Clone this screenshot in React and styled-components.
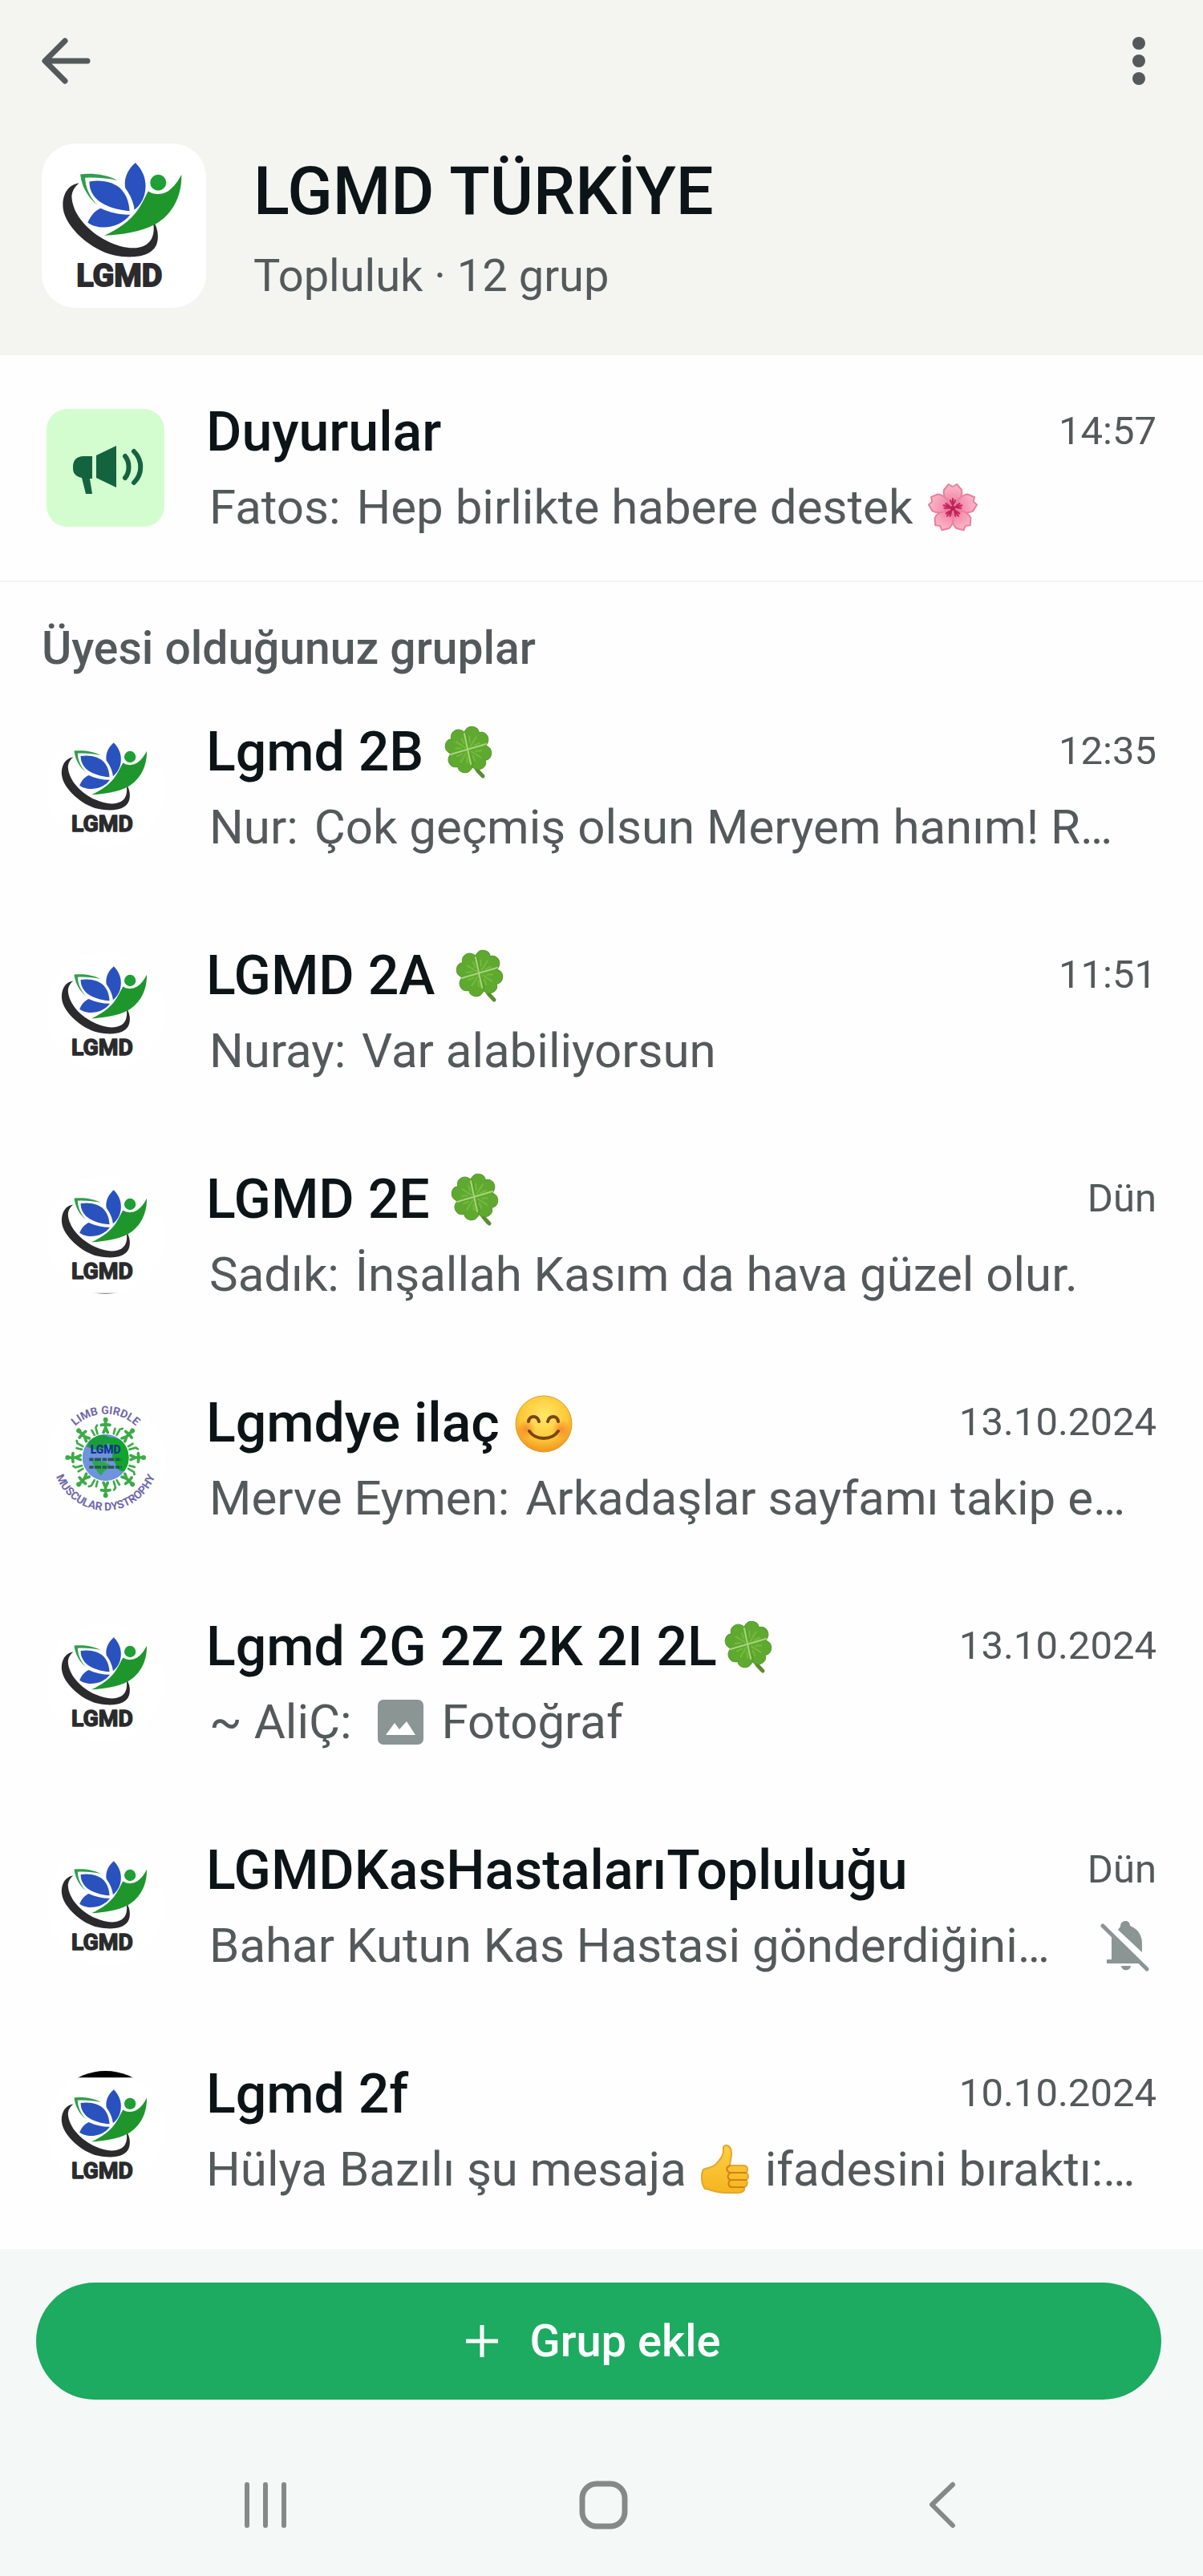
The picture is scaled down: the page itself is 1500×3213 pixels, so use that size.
import React from "react";
import styled, { createGlobalStyle } from "styled-components";

const GlobalStyle = createGlobalStyle`
  *, *::before, *::after { box-sizing: border-box; }
  body { margin: 0; background: #fefefe; font-family: Roboto, "Noto Sans", sans-serif; }
  h1, h2, p, ul { margin: 0; padding: 0; }
`;

const ink = "#0c1418";
const muted = "#54595b";

const Screen = styled.div`
  display: flex;
  flex-direction: column;
  min-height: 100vh;
`;

const Header = styled.header`
  background: #f4f5f1;
  padding-bottom: 58px;
  border-bottom: 1px solid #f0f1ee;
`;

const TopBar = styled.div`
  display: flex;
  justify-content: space-between;
  align-items: center;
  height: 152px;
  padding: 0 40px;
`;

const IconButton = styled.button`
  display: grid;
  place-items: center;
  width: 80px;
  height: 80px;
  padding: 0;
  border: 0;
  background: none;
  color: ${muted};
  cursor: pointer;
`;

const Profile = styled.div`
  display: flex;
  gap: 59px;
  padding: 27px 52px 0;
`;

const ProfileText = styled.div`
  display: flex;
  flex-direction: column;
  gap: 23px;
  padding-top: 12px;
`;

const Title = styled.h1`
  font-size: 83px;
  line-height: 96px;
  font-weight: 500;
  color: ${ink};
`;

const Subtitle = styled.p`
  font-size: 56px;
  line-height: 68px;
  color: ${muted};
`;

const Avatar = styled.div`
  flex: none;
  display: grid;
  place-items: center;
  width: ${(p) => (p.$large ? 205 : 147)}px;
  height: ${(p) => (p.$large ? 205 : 147)}px;
  border-radius: ${(p) => (p.$round ? "50%" : p.$large ? "42px" : "26px")};
  background: ${(p) => p.$bg || "#ffffff"};
  overflow: hidden;

  svg { display: block; }
`;

const Row = styled.a`
  display: flex;
  align-items: center;
  gap: 52px;
  height: ${(p) => (p.$first ? 283 : 279)}px;
  padding: 0 58px;
  border-bottom: ${(p) => (p.$first ? "2px solid #f3f4f4" : "0")};
  color: inherit;
  text-decoration: none;
`;

const RowBody = styled.div`
  flex: 1;
  min-width: 0;
  display: flex;
  flex-direction: column;
  gap: 18px;
`;

const Line = styled.div`
  display: flex;
  justify-content: space-between;
`;

const Name = styled.h2`
  font-size: 68px;
  line-height: 80px;
  font-weight: 500;
  color: ${ink};
  white-space: nowrap;
`;

const Time = styled.time`
  padding-top: 10px;
  font-size: 49px;
  line-height: 58px;
  color: ${muted};
  white-space: nowrap;
`;

const Preview = styled.p`
  padding-left: ${(p) => (p.$flush ? 0 : 4)}px;
  font-size: 60px;
  line-height: 72px;
  color: ${muted};
  white-space: nowrap;
`;

const Sender = styled.span`
  margin-right: 5px;
`;

const Muted = styled.span`
  display: grid;
  place-items: center;
  padding-right: 8px;
`;

const Section = styled.h2`
  padding: 49px 52px 0;
  font-size: 57px;
  line-height: 68px;
  font-weight: 500;
  color: ${muted};
`;

const List = styled.ul`
  list-style: none;
  padding-bottom: 9px;
`;

const Footer = styled.footer`
  flex: 1;
  padding-top: 42px;
  background: #f4f8f7;
`;

const AddButton = styled.button`
  display: flex;
  align-items: center;
  justify-content: center;
  gap: 32px;
  width: calc(100% - 97px);
  height: 146px;
  margin: 0 52px 0 45px;
  padding: 0 22px 0 0;
  border: 0;
  border-radius: 73px;
  background: #1daa61;
  color: #ffffff;
  font: 500 56px/68px Roboto, "Noto Sans", sans-serif;
  cursor: pointer;
`;

const NavBar = styled.nav`
  display: grid;
  grid-template-columns: repeat(3, 1fr);
  justify-items: center;
  padding: 91px 117px 47px 121px;
`;

const Glyph = styled.svg`
  vertical-align: ${(p) => p.$drop}px;
  margin-left: ${(p) => p.$before || 0}px;
  margin-right: ${(p) => p.$after || 0}px;
`;

function LgmdLogo({ size, variant }) {
  return (
    <svg width={size} height={size} viewBox="6 26 614 614" role="img" aria-label="LGMD">
      {variant === "capped" && <path d="M6 26H620V60H6Z" fill="#000" />}
      {variant === "based" && <path d="M6 635H620V640H6Z" fill="#888" />}
      <g transform={variant === "capped" ? "translate(0 25)" : undefined}>
        <path
          d="M146 174C102 178 80 222 86 270C96 340 190 424 275 443C345 458 420 450 436 400C444 374 440 340 422 316C428 352 424 386 396 404C356 426 310 416 262 396C180 358 122 292 118 226C119 202 130 186 146 174Z"
          fill="#2b2b2d"
        />
        <path d="M150 141C196 136 248 142 290 164C254 156 212 152 168 154C170 192 186 226 214 256C178 226 156 188 150 141Z" fill="#2f9e4a" />
        <path d="M184 168C232 160 280 172 304 198C324 220 332 246 334 278C290 274 244 262 216 238C194 218 184 196 184 168Z" fill="#2a52be" />
        <path d="M356 98C392 134 400 176 390 216C384 240 370 260 352 274C350 246 336 216 318 192C312 158 326 124 356 98Z" fill="#2a52be" />
        <path d="M178 322C188 296 206 276 226 268C260 284 296 292 336 292C310 328 262 344 220 338C204 336 188 330 178 322Z" fill="#2a52be" />
        <path d="M528 142C530 220 496 290 430 328C372 358 306 366 240 370C292 346 330 318 356 286C378 258 390 228 404 204C424 218 454 218 478 204C500 188 516 166 528 142Z" fill="#1f962c" />
        <circle cx="441" cy="172" r="30" fill="#1f9f35" />
        <text
          x="296"
          y="560"
          textAnchor="middle"
          fontFamily="Roboto, sans-serif"
          fontWeight="700"
          fontSize="118"
          fill="#2b2b2d"
          stroke="#2b2b2d"
          strokeWidth="6"
          strokeLinejoin="round"
        >
          LGMD
        </text>
      </g>
    </svg>
  );
}

function GlobeLogo({ size }) {
  const figures = Array.from({ length: 16 }, (_, i) => i);
  return (
    <svg width={size} height={size} viewBox="0 0 441 441" role="img" aria-label="Limb Girdle Muscular Dystrophy">
      <defs>
        <path id="globe-top" d="M58 216A163 163 0 0 1 384 216" />
        <path id="globe-bottom" d="M23 216A198 198 0 0 0 419 216" />
        <clipPath id="globe-clip"><circle cx="221" cy="216" r="87" /></clipPath>
      </defs>
      {figures.map((i) => (
        <g key={i} transform={`rotate(${i * 22.5} 221 216)`} stroke="#3cab45" fill="none" strokeLinecap="round">
          {i % 2 === 0 ? (
            <>
              <circle cx="221" cy="74" r="9" fill="#3cab45" stroke="none" />
              <path d="M221 82V104M205 94L221 92L237 94M221 104L213 122M221 104L229 122" strokeWidth="11" />
            </>
          ) : (
            <path d="M212 102L215 122M230 98L227 122M230 98L238 92" strokeWidth="8" />
          )}
        </g>
      ))}
      <g clipPath="url(#globe-clip)">
        <rect x="134" y="129" width="174" height="174" fill="#6f93dc" />
        <path d="M160 150C190 120 230 130 250 150C220 160 230 180 200 186C180 190 170 180 150 176Z" fill="#1c9c3c" />
        <path d="M236 140C300 140 330 200 300 262C282 276 262 262 258 240C250 224 240 212 252 196C236 190 226 160 236 140Z" fill="#12a52c" />
        <path d="M170 232C196 222 226 234 244 250C226 262 216 262 204 284C188 270 180 250 170 232Z" fill="#2da850" />
      </g>
      <text x="221" y="200" textAnchor="middle" fontFamily="Roboto, sans-serif" fontWeight="900" fontSize="42" fill="#10358c">LGMD</text>
      <path d="M160 223H280M160 252H282" stroke="#24584f" strokeWidth="11" strokeDasharray="16 4 24 5" />
      <g fontFamily="Roboto, sans-serif" fontWeight="700" fontSize="42" fill="#6f68ac">
        <text textAnchor="middle"><textPath href="#globe-top" startOffset="50%">LIMB GIRDLE</textPath></text>
        <text textAnchor="middle"><textPath href="#globe-bottom" startOffset="50%">MUSCULAR DYSTROPHY</textPath></text>
      </g>
    </svg>
  );
}

function Clover() {
  return (
    <Glyph $drop={-12} $before={3} width="72" height="72" viewBox="0 0 72 72" role="img" aria-label="dört yapraklı yonca">
      <path d="M36 34C39 48 44 58 54 67" stroke="#5d8a32" strokeWidth="5" strokeLinecap="round" fill="none" />
      {[32, 122, 212, 302].map((angle) => (
        <g key={angle} transform={`translate(36 34) rotate(${angle})`}>
          <path
            d="M0 0C-4 -5 -16 -8 -16 -18C-16 -28 -5 -31 0 -25C5 -31 16 -28 16 -18C16 -8 4 -5 0 0Z"
            fill="#5fa930"
            stroke="#559a2b"
            strokeWidth="1"
          />
          <path d="M0 -4V-19M-3 -8L-8 -15M3 -8L8 -15" stroke="#74bb3d" strokeWidth="2" fill="none" />
        </g>
      ))}
      <path d="M31 14L39 52M14 40L58 27" stroke="#a9d57c" strokeWidth="2" strokeLinecap="round" />
    </Glyph>
  );
}

function Smile() {
  return (
    <Glyph $drop={-14} $before={2} width="72" height="72" viewBox="0 0 72 72" role="img" aria-label="gülümseyen yüz">
      <defs>
        <radialGradient id="smile-face" cx="50%" cy="36%" r="64%">
          <stop offset="0" stopColor="#ffe86b" />
          <stop offset="0.65" stopColor="#fdc936" />
          <stop offset="1" stopColor="#ef9420" />
        </radialGradient>
        <radialGradient id="smile-blush">
          <stop offset="0" stopColor="#f77a2c" stopOpacity="0.8" />
          <stop offset="1" stopColor="#f77a2c" stopOpacity="0" />
        </radialGradient>
      </defs>
      <circle cx="36" cy="36" r="35" fill="url(#smile-face)" stroke="#e39a2a" />
      <circle cx="14" cy="43" r="12" fill="url(#smile-blush)" />
      <circle cx="58" cy="43" r="12" fill="url(#smile-blush)" />
      <path d="M17 33C18 25 28 25 30 33M41 33C43 25 53 25 54 33M18 45C26 57 46 57 54 45" stroke="#7a4311" strokeWidth="4" strokeLinecap="round" fill="none" />
    </Glyph>
  );
}

function Blossom() {
  return (
    <Glyph $drop={-12} $before={2} width="66" height="64" viewBox="0 0 66 64" role="img" aria-label="kiraz çiçeği">
      <defs>
        <radialGradient id="petal" gradientUnits="userSpaceOnUse" cx="0" cy="0" r="31">
          <stop offset="0" stopColor="#d9386f" />
          <stop offset="0.4" stopColor="#f58fae" />
          <stop offset="1" stopColor="#fbbccb" />
        </radialGradient>
      </defs>
      {[0, 72, 144, 216, 288].map((angle) => (
        <g key={angle} transform={`translate(33 33) rotate(${angle})`}>
          <path d="M0 0C-6 -7 -13 -14 -11 -23L-5 -30L0 -27L5 -30L11 -23C13 -14 6 -7 0 0Z" fill="url(#petal)" stroke="#e8809f" strokeWidth="2" strokeLinejoin="round" />
          <path d="M0 0V-12M0 -2L-3 -10M0 -2L3 -10" stroke="#c2245c" strokeWidth="2" strokeLinecap="round" />
        </g>
      ))}
      <circle cx="33" cy="33" r="3" fill="#bd1f55" />
    </Glyph>
  );
}

function ThumbUp() {
  return (
    <Glyph $drop={-12} $after={2} width="66" height="64" viewBox="0 0 66 64" role="img" aria-label="beğeni">
      <defs>
        <linearGradient id="thumb" x1="0" y1="0" x2="0" y2="1">
          <stop offset="0" stopColor="#fdd044" />
          <stop offset="1" stopColor="#f6b41f" />
        </linearGradient>
      </defs>
      <path
        d="M6 32C12 29 17 30 21 26C26 20 32 15 31 6C30 1 37 0 40 6C43 13 39 21 39 27H57C62 28 62 34 59 36C63 38 63 43 59 45C62 47 61 53 57 54C58 58 55 61 50 61H32C22 61 16 57 8 56C3 50 3 38 6 32Z"
        fill="url(#thumb)"
        stroke="#e5a52e"
        strokeWidth="2"
        strokeLinejoin="round"
      />
      <path d="M39 27C33 30 35 35 40 36H59M40 36C35 39 36 44 40 45H59M40 45C36 48 37 53 41 54H57" stroke="#d0821a" strokeWidth="2" fill="none" strokeLinecap="round" />
    </Glyph>
  );
}

function PhotoIcon() {
  return (
    <Glyph $drop={-8} $before={12} $after={8} width="57" height="56" viewBox="0 0 57 56" aria-hidden="true">
      <rect width="57" height="56" rx="7" fill="#8a9594" />
      <path d="M10 44L21 29L27 37L36 27L47 44Z" fill="#fefefe" />
    </Glyph>
  );
}

function BellOff() {
  return (
    <svg width="64" height="64" viewBox="0 0 64 64" role="img" aria-label="Sessize alındı">
      <path d="M27 8C27 -1 39 -1 39 7C49 11 54 19 54 29V40L24 12Z" fill="#8a9594" />
      <path d="M16 18L51 54H10V49H16Z" fill="#8a9594" />
      <path d="M28 57H40C39 64 29 64 28 57Z" fill="#8a9594" />
      <path d="M5 7L60 61" stroke="#8a9594" strokeWidth="5" strokeLinecap="round" />
    </svg>
  );
}

function Megaphone() {
  return (
    <svg width="147" height="147" viewBox="0 0 147 147" aria-hidden="true">
      <g fill="#14633f">
        <path d="M46 59H57V87H54L57 106H49L44 86C36 84 33 80 33 74V72C33 64 38 59 46 59Z" />
        <path d="M62 58L87 46V98L62 86Z" />
      </g>
      <path d="M98 59C104 66 104 79 98 86M109 53C120 64 120 81 109 92" stroke="#14633f" strokeWidth="6" strokeLinecap="round" fill="none" />
    </svg>
  );
}

const groups = [
  { name: <>Lgmd 2B <Clover /></>, time: "12:35", sender: "Nur:", text: "Çok geçmiş olsun Meryem hanım! R…" },
  { name: <>LGMD 2A <Clover /></>, time: "11:51", sender: "Nuray:", text: "Var alabiliyorsun" },
  { name: <>LGMD 2E <Clover /></>, time: "Dün", sender: "Sadık:", text: "İnşallah Kasım da hava güzel olur.", logo: "based" },
  { name: <>Lgmdye ilaç <Smile /></>, time: "13.10.2024", sender: "Merve Eymen:", text: "Arkadaşlar sayfamı takip e…", logo: "globe" },
  { name: <>Lgmd 2G 2Z 2K 2I 2L<Clover /></>, time: "13.10.2024", sender: "~ AliÇ:", text: <> <PhotoIcon /> Fotoğraf</> },
  { name: "LGMDKasHastalarıTopluluğu", time: "Dün", text: "Bahar Kutun Kas Hastasi gönderdiğini…", silent: true },
  { name: "Lgmd 2f", time: "10.10.2024", text: <>Hülya Bazılı şu mesaja <ThumbUp /> ifadesini bıraktı:…</>, logo: "capped", flush: true },
];

function ChatRow({ name, time, sender, text, silent, flush, first, children }) {
  return (
    <Row href="#" $first={first}>
      {children}
      <RowBody>
        <Line>
          <Name>{name}</Name>
          <Time>{time}</Time>
        </Line>
        <Line>
          <Preview $flush={flush}>
            {sender && <><Sender>{sender}</Sender> </>}
            {text}
          </Preview>
          {silent && <Muted><BellOff /></Muted>}
        </Line>
      </RowBody>
    </Row>
  );
}

export default function App() {
  return (
    <Screen>
      <GlobalStyle />
      <Header>
        <TopBar>
          <IconButton type="button" aria-label="Geri">
            <svg width="80" height="80" viewBox="0 0 80 80" fill="none" stroke="currentColor" strokeWidth="7" strokeLinecap="round" strokeLinejoin="round">
              <path d="M41 15L16 40L41 65M17 40H69" />
            </svg>
          </IconButton>
          <IconButton type="button" aria-label="Diğer seçenekler">
            <svg width="80" height="80" viewBox="0 0 80 80" fill="currentColor">
              <circle cx="40" cy="18" r="8" />
              <circle cx="40" cy="40" r="8" />
              <circle cx="40" cy="62" r="8" />
            </svg>
          </IconButton>
        </TopBar>
        <Profile>
          <Avatar $large><LgmdLogo size={205} /></Avatar>
          <ProfileText>
            <Title>LGMD TÜRKİYE</Title>
            <Subtitle>Topluluk · 12 grup</Subtitle>
          </ProfileText>
        </Profile>
      </Header>
      <main>
        <ChatRow first name="Duyurular" time="14:57" sender="Fatos:" text={<>Hep birlikte habere destek <Blossom /></>}>
          <Avatar $bg="#d4fdcf"><Megaphone /></Avatar>
        </ChatRow>
        <Section>Üyesi olduğunuz gruplar</Section>
        <List>
          {groups.map((group, i) => (
            <li key={i}>
              <ChatRow {...group}>
                <Avatar $round>
                  {group.logo === "globe" ? <GlobeLogo size={147} /> : <LgmdLogo size={147} variant={group.logo} />}
                </Avatar>
              </ChatRow>
            </li>
          ))}
        </List>
      </main>
      <Footer>
        <AddButton type="button">
          <svg width="56" height="56" viewBox="0 0 56 56" stroke="currentColor" strokeWidth="5" aria-hidden="true">
            <path d="M28 8V48M8 28H48" />
          </svg>
          Grup ekle
        </AddButton>
        <NavBar aria-label="Sistem gezinmesi">
          <IconButton type="button" aria-label="Son uygulamalar">
            <svg width="80" height="80" viewBox="0 0 80 80" stroke="#858988" strokeWidth="6" strokeLinecap="round">
              <path d="M17 15V66M40 15V66M63 15V66" />
            </svg>
          </IconButton>
          <IconButton type="button" aria-label="Ana ekran">
            <svg width="80" height="80" viewBox="0 0 80 80" fill="none" stroke="#858988" strokeWidth="7">
              <rect x="14" y="14" width="53" height="53" rx="18" />
            </svg>
          </IconButton>
          <IconButton type="button" aria-label="Geri git">
            <svg width="80" height="80" viewBox="0 0 80 80" fill="none" stroke="#858988" strokeWidth="6" strokeLinecap="round" strokeLinejoin="round">
              <path d="M55 15L29 40L55 66" />
            </svg>
          </IconButton>
        </NavBar>
      </Footer>
    </Screen>
  );
}
